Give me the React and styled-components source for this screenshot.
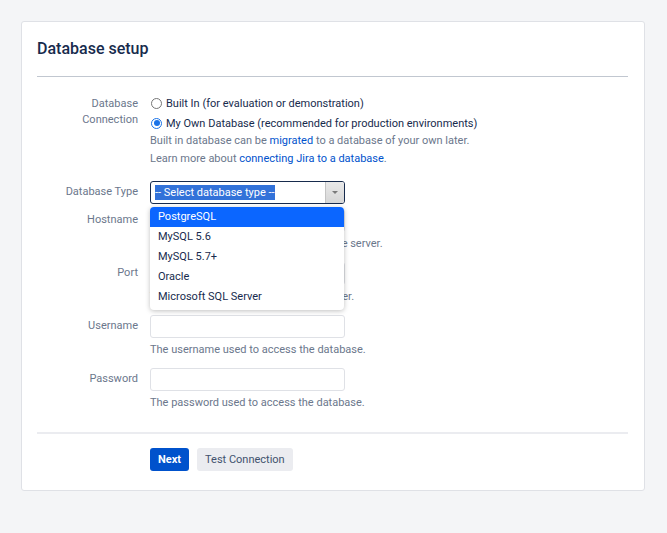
import React from 'react'
import styled, { createGlobalStyle } from 'styled-components'

const GlobalStyle = createGlobalStyle`
  body {
    margin: 0;
    background: #f4f5f7;
    font-family: Roboto, "Liberation Sans", sans-serif;
    color: #172b4d;
  }
`

const Page = styled.div`
  padding: 21px 22px 21px 21px;
`

const Card = styled.div`
  width: 624px;
  background: #fff;
  border: 1px solid #dfe1e6;
  border-radius: 3px;
  padding: 0 16px 19px 15px;
  box-sizing: border-box;
`

const Title = styled.h2`
  margin: 0;
  padding: 17px 0 17px;
  font-size: 16px;
  line-height: 20px;
  font-weight: 500;
  color: #172b4d;
  border-bottom: 1px solid #c1c7d0;
`

const Form = styled.div`
  padding-top: 18px;
`

const Row = styled.div`
  display: grid;
  grid-template-columns: 101px 195px;
  column-gap: 12px;
  margin-bottom: ${p => p.$gap ?? 9}px;
`

const Label = styled.div`
  text-align: right;
  font-size: 11px;
  line-height: 16px;
  color: #6b778c;
  padding-top: ${p => p.$top ?? 3}px;
`

const Field = styled.div`
  position: relative;
  white-space: nowrap;
`

const RadioGroup = styled.div`
  margin-top: -2px;
`

const RadioLine = styled.label`
  display: flex;
  align-items: center;
  height: 20px;
  font-size: 11px;
  color: #172b4d;
`

const Radio = styled.span`
  flex-shrink: 0;
  width: 11px;
  height: 11px;
  box-sizing: border-box;
  border-radius: 50%;
  margin: 0 4px 0 1px;
  border: 1px solid ${p => (p.$checked ? '#1a73e8' : '#767676')};
  display: flex;
  align-items: center;
  justify-content: center;
  &::after {
    content: '';
    display: ${p => (p.$checked ? 'block' : 'none')};
    width: 6px;
    height: 6px;
    border-radius: 50%;
    background: #1a73e8;
  }
`

const Desc = styled.div`
  font-size: 11px;
  line-height: 18px;
  color: #6b778c;
  margin-top: ${p => p.$top ?? 3}px;
`

const Link = styled.a`
  color: #0052cc;
  text-decoration: none;
`

const Select = styled.div`
  height: 23px;
  width: 195px;
  box-sizing: border-box;
  border: 1px solid #172b4d;
  border-radius: 3px;
  display: flex;
  align-items: stretch;
  overflow: hidden;
  font-size: 11px;
`

const SelectText = styled.div`
  flex: 1;
  display: flex;
  align-items: center;
  padding-left: 4px;
  span {
    background: #3272d9;
    color: #fff;
    line-height: 15px;
  }
`

const Arrow = styled.div`
  width: 18px;
  background: linear-gradient(#e9e9e9, #d6d6d6);
  border-left: 1px solid #c4c4c4;
  display: flex;
  align-items: center;
  justify-content: center;
  &::after {
    content: '';
    border-left: 3px solid transparent;
    border-right: 3px solid transparent;
    border-top: 3px solid #7a7a7a;
  }
`

const Input = styled.div`
  height: 23px;
  width: 195px;
  box-sizing: border-box;
  border: 1px solid #dfe1e6;
  border-radius: 3px;
  background: #fff;
`

const Menu = styled.ul`
  position: absolute;
  top: 26px;
  left: 0;
  width: 194px;
  margin: 0;
  padding: 0 0 3px;
  list-style: none;
  background: #fff;
  border-radius: 4px;
  box-shadow: 0 1px 5px rgba(0, 0, 0, 0.25);
  z-index: 2;
  overflow: hidden;
`

const MenuItem = styled.li`
  height: 20px;
  line-height: 20px;
  padding-left: 8px;
  font-size: 11px;
  color: ${p => (p.$active ? '#fff' : '#172b4d')};
  background: ${p => (p.$active ? '#0b66ff' : 'transparent')};
`

const Footer = styled.div`
  margin-top: 20px;
  border-top: 2px solid #ebecf0;
  padding: 14px 0 0 113px;
  display: flex;
  gap: 8px;
`

const Button = styled.button`
  height: 23px;
  padding: 0 8px;
  border: none;
  border-radius: 3px;
  font-family: inherit;
  font-size: 11px;
  font-weight: ${p => (p.$primary ? 700 : 400)};
  color: ${p => (p.$primary ? '#fff' : '#42526e')};
  background: ${p => (p.$primary ? '#0052cc' : '#ebecf0')};
  cursor: pointer;
`

const options = ['PostgreSQL', 'MySQL 5.6', 'MySQL 5.7+', 'Oracle', 'Microsoft SQL Server']

function TextField({ label, help }) {
  return (
    <Row>
      <Label>{label}</Label>
      <Field>
        <Input />
        <Desc>{help}</Desc>
      </Field>
    </Row>
  )
}

export default function App() {
  return (
    <>
      <GlobalStyle />
      <Page>
        <Card>
          <Title>Database setup</Title>
          <Form>
            <Row $gap={13}>
              <Label $top={1}>Database<br />Connection</Label>
              <Field>
                <RadioGroup>
                  <RadioLine><Radio />Built In (for evaluation or demonstration)</RadioLine>
                  <RadioLine><Radio $checked />My Own Database (recommended for production environments)</RadioLine>
                </RadioGroup>
                <Desc $top={-1}>Built in database can be <Link>migrated</Link> to a database of your own later.</Desc>
                <Desc $top={0}>Learn more about <Link>connecting Jira to a database</Link>.</Desc>
              </Field>
            </Row>
            <Row $gap={5}>
              <Label>Database Type</Label>
              <Field>
                <Select>
                  <SelectText><span>-- Select database type --</span></SelectText>
                  <Arrow />
                </Select>
                <Menu>
                  {options.map((o, i) => (
                    <MenuItem key={o} $active={i === 0}>{o}</MenuItem>
                  ))}
                </Menu>
              </Field>
            </Row>
            <TextField label="Hostname" help="Hostname or IP address of the database server." />
            <TextField label="Port" help="TCP Port Number for the database server." />
            <TextField label="Username" help="The username used to access the database." />
            <TextField label="Password" help="The password used to access the database." />
          </Form>
          <Footer>
            <Button $primary>Next</Button>
            <Button>Test Connection</Button>
          </Footer>
        </Card>
      </Page>
    </>
  )
}
